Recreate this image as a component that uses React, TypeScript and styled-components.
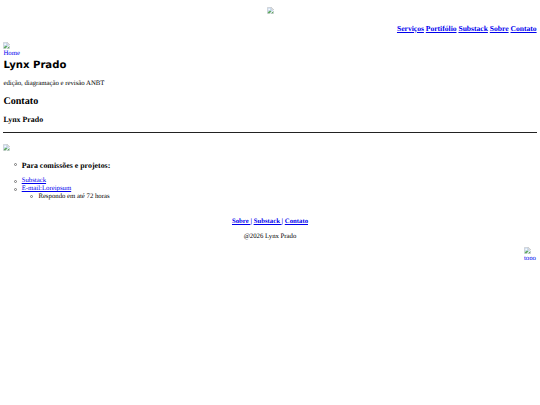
import React from "react";
import styled, { createGlobalStyle } from "styled-components";

const GlobalStyle = createGlobalStyle`
  body {
    margin: 0;
    background: #fff;
    color: #000;
    font: 6.75px/8px "Liberation Serif", "Times New Roman", serif;
    text-rendering: geometricPrecision;
    overflow: hidden;
  }
`;

const Page = styled.div`
  padding: 7px 3.4px 0;
  height: 398px;
`;

const Icon = styled.svg`
  display: block;
  flex: none;
  width: 7px;
  height: 7px;
`;

const Banner = styled.header`
  display: flex;
  justify-content: center;
  height: 17px;
`;

const Link = styled.a`
  color: #0000ee;
  text-decoration: underline;
  text-decoration-thickness: 0.6px;
`;

const Nav = styled.nav`
  display: flex;
  justify-content: flex-end;
  gap: 1.9px;
  height: 18px;
  font-size: 7.59px;
  line-height: 9px;
  font-weight: bold;
`;

const ImageLink = styled.a<{ $width: number; $height: number }>`
  display: block;
  width: ${(p) => p.$width}px;
  height: ${(p) => p.$height}px;
  overflow: hidden;
  color: #0000ee;
  line-height: 9.6px;
  text-decoration: none;
`;

const Title = styled.h1`
  box-sizing: border-box;
  margin: 0;
  padding-top: 1.5px;
  height: 21px;
  font: bold 10.12px/14px "DejaVu Sans", Verdana, sans-serif;
`;

const Tagline = styled.p`
  margin: 0;
  padding-top: 1px;
  height: 16px;
`;

const Heading = styled.h2`
  margin: 0;
  height: 19px;
  font-size: 10.12px;
  line-height: 12px;
`;

const Subheading = styled.h3`
  margin: 0;
  font-size: 7.9px;
  line-height: 9px;
`;

const Rule = styled.hr`
  margin: 8px 0 11px;
  border: 0;
  height: 1px;
  background: #222;
`;

const List = styled.ul<{ $top: number; $indent: number }>`
  list-style: none;
  margin: ${(p) => p.$top}px 0 0;
  padding-left: ${(p) => p.$indent}px;
`;

const Item = styled.li<{ $height: number }>`
  position: relative;
  height: ${(p) => p.$height}px;

  &::before {
    content: "";
    position: absolute;
    box-sizing: border-box;
    left: -8px;
    top: 2.4px;
    width: 3px;
    height: 3px;
    border: 0.6px solid #777;
    border-radius: 50%;
  }
`;

const Footer = styled.footer`
  display: flex;
  flex-direction: column;
  align-items: center;
  gap: 7px;
  padding-top: 17px;
`;

const FooterLinks = styled.div`
  font-weight: bold;
  color: #0000ee;
`;

const TopRow = styled.div`
  display: flex;
  justify-content: flex-end;
  padding-top: 6px;
`;

const BrokenImage = () => (
  <Icon viewBox="0 0 16 16" aria-hidden="true">
    <path d="M1 1h9l5 5v9H1z" fill="#cbdcf0" stroke="#b5b5b5" />
    <path d="M10 1v5h5z" fill="#fff" stroke="#b5b5b5" />
    <circle cx="5" cy="5.5" r="1.8" fill="#fff" />
    <path d="M2 14v-2l5-4 3 2-4 4z" fill="#62aa5e" />
    <path d="M9 14l5-5v5z" fill="#62aa5e" />
    <path d="M6 16l10-9" stroke="#fff" strokeWidth="1.8" />
  </Icon>
);

const navItems = ["Serviços", "Portifólio", "Substack", "Sobre", "Contato"];

export default function App() {
  return (
    <>
      <GlobalStyle />
      <Page>
        <Banner>
          <BrokenImage />
        </Banner>
        <Nav>
          {navItems.map((item) => (
            <Link href="#" key={item}>{item}</Link>
          ))}
        </Nav>
        <ImageLink href="#" $width={20} $height={15.5}>
          <BrokenImage />
          Home
        </ImageLink>
        <Title>Lynx Prado</Title>
        <Tagline>edição, diagramação e revisão ANBT</Tagline>
        <Heading>Contato</Heading>
        <Subheading>Lynx Prado</Subheading>
        <Rule />
        <BrokenImage />
        <List $top={10.2} $indent={18.3}>
          <Item $height={16.8}>
            <Subheading>Para comissões e projetos:</Subheading>
          </Item>
          <Item $height={8}>
            <Link href="#">Substack</Link>
          </Item>
          <Item $height={15.5}>
            <Link href="#">E-mail:Loreipsum</Link>
            <List $top={-0.4} $indent={16.7}>
              <Item $height={7.6}>Respondo em até 72 horas</Item>
            </List>
          </Item>
        </List>
        <Footer>
          <FooterLinks>
            <Link href="#">Sobre </Link>| <Link href="#">Substack </Link>| <Link href="#">Contato</Link>
          </FooterLinks>
          <div>@2026 Lynx Prado</div>
        </Footer>
        <TopRow>
          <ImageLink href="#" $width={12.7} $height={12.8}>
            <BrokenImage />
            topo
          </ImageLink>
        </TopRow>
      </Page>
    </>
  );
}
